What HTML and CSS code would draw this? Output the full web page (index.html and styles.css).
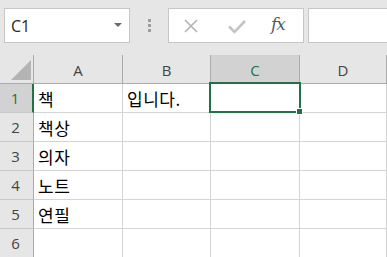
FILE: index.html
```html
<!DOCTYPE html>
<html lang="ko">
<head>
<meta charset="utf-8">
<link rel="stylesheet" href="styles.css">
</head>
<body>
<div class="app">
  <div class="toolbar">
    <div class="namebox">
      <span class="name">C1</span>
      <span class="caret"></span>
    </div>
    <div class="dots"><i></i><i></i><i></i></div>
    <div class="fbuttons">
      <svg class="ico-x" width="16" height="16" viewBox="0 0 16 16"><path d="M2 2 L14 14 M14 2 L2 14" stroke="#b3b3b3" stroke-width="1.6" fill="none"/></svg>
      <svg class="ico-check" width="20" height="16" viewBox="0 0 20 16"><path d="M2 8.5 L7.5 14 L18 3" stroke="#c4c4c4" stroke-width="2.6" fill="none"/></svg>
      <span class="fx">fx</span>
    </div>
    <div class="finput"></div>
  </div>
  <div class="sheet">
    <div class="hdr corner"><span class="tri"></span></div>
    <div class="hdr col">A</div>
    <div class="hdr col">B</div>
    <div class="hdr col sel">C</div>
    <div class="hdr col">D</div>

    <div class="hdr row sel">1</div>
    <div class="cell">책</div>
    <div class="cell">입니다.</div>
    <div class="cell"></div>
    <div class="cell"></div>

    <div class="hdr row">2</div>
    <div class="cell">책상</div>
    <div class="cell"></div>
    <div class="cell"></div>
    <div class="cell"></div>

    <div class="hdr row">3</div>
    <div class="cell">의자</div>
    <div class="cell"></div>
    <div class="cell"></div>
    <div class="cell"></div>

    <div class="hdr row">4</div>
    <div class="cell">노트</div>
    <div class="cell"></div>
    <div class="cell"></div>
    <div class="cell"></div>

    <div class="hdr row">5</div>
    <div class="cell">연필</div>
    <div class="cell"></div>
    <div class="cell"></div>
    <div class="cell"></div>

    <div class="hdr row">6</div>
    <div class="cell"></div>
    <div class="cell"></div>
    <div class="cell"></div>
    <div class="cell"></div>

    <div class="selection"><span class="handle"></span></div>
  </div>
</div>
</body>
</html>
```

FILE: styles.css
```css
* { box-sizing: border-box; }
html, body {
  margin: 0;
  padding: 0;
  background: #e6e6e6;
  width: 387px;
  height: 257px;
  overflow: hidden;
}
.app {
  width: 387px;
  height: 257px;
  overflow: hidden;
  font-family: "Noto Sans", "Open Sans", sans-serif;
}
.toolbar {
  height: 55px;
  display: flex;
  align-items: flex-start;
  padding: 8px 0 0 4px;
}
.toolbar > * { flex-shrink: 0; }
.namebox {
  width: 126px;
  height: 35px;
  background: #fff;
  border: 1px solid #c6c6c6;
  display: flex;
  align-items: center;
  justify-content: space-between;
  padding: 0 7px 0 6px;
}
.name {
  font-family: "Open Sans", "Noto Sans", sans-serif;
  font-size: 16px;
  color: #262626;
  line-height: 1;
}
.caret {
  width: 0;
  height: 0;
  border-left: 4px solid transparent;
  border-right: 4px solid transparent;
  border-top: 4px solid #6a6a6a;
  margin-bottom: 1px;
}
.dots {
  margin-left: 18px;
  height: 35px;
  display: flex;
  flex-direction: column;
  justify-content: center;
  gap: 2px;
  width: 3px;
}
.dots i {
  display: block;
  width: 3px;
  height: 3px;
  background: #9d9d9d;
}
.fbuttons {
  margin-left: 17px;
  width: 136px;
  height: 35px;
  background: #fff;
  border: 1px solid #c6c6c6;
  display: flex;
  align-items: center;
  padding-left: 14px;
}
.ico-x { margin-top: 1px; }
.ico-check { margin-left: 28px; margin-top: 1px; }
.fx {
  margin-left: 24px;
  font-family: "DejaVu Serif", "Liberation Serif", serif;
  font-style: italic;
  font-size: 17px;
  color: #5a5a5a;
  letter-spacing: -1px;
  line-height: 1;
  margin-top: -2px;
}
.finput {
  margin-left: 4px;
  width: 100px;
  height: 35px;
  background: #fff;
  border: 1px solid #c6c6c6;
  border-right: none;
}
.sheet {
  position: relative;
  display: grid;
  grid-template-columns: 34px 89px 88px 89px 87px;
  grid-auto-rows: 29px;
}
.hdr {
  background: #e6e6e6;
  color: #444;
  font-family: "Open Sans", "Noto Sans", sans-serif;
  font-size: 15px;
  display: flex;
  align-items: center;
  justify-content: center;
}
.hdr.col {
  border-right: 1px solid #ababab;
  border-bottom: 1px solid #ababab;
  padding-top: 2px;
}
.hdr.corner {
  border-right: 1px solid #ababab;
  border-bottom: 1px solid #ababab;
  position: relative;
}
.tri {
  position: absolute;
  right: 2px;
  bottom: 3px;
  width: 0;
  height: 0;
  border-left: 20px solid transparent;
  border-bottom: 20px solid #b4b4b4;
}
.hdr.row {
  border-right: 1px solid #ababab;
  border-bottom: 1px solid #c8c8c8;
  padding-right: 2px;
}
.hdr.sel {
  background: #d2d2d2;
  color: #217346;
}
.hdr.row.sel {
  border-right: 2px solid #217346;
}
.cell {
  background: #fff;
  border-right: 1px solid #d4d4d4;
  border-bottom: 1px solid #d4d4d4;
  font-family: "Noto Sans CJK KR", "Noto Sans", sans-serif;
  font-size: 17px;
  color: #000;
  padding: 0 0 0 4px;
  display: flex;
  align-items: center;
  white-space: nowrap;
  letter-spacing: 0.5px;
}
.selection {
  position: absolute;
  left: 209px;
  top: 27px;
  width: 92px;
  height: 31px;
  border: 2px solid #217346;
}
.handle {
  position: absolute;
  right: -4px;
  bottom: -4px;
  width: 7px;
  height: 7px;
  background: #217346;
  border: 1px solid #fff;
}
```
